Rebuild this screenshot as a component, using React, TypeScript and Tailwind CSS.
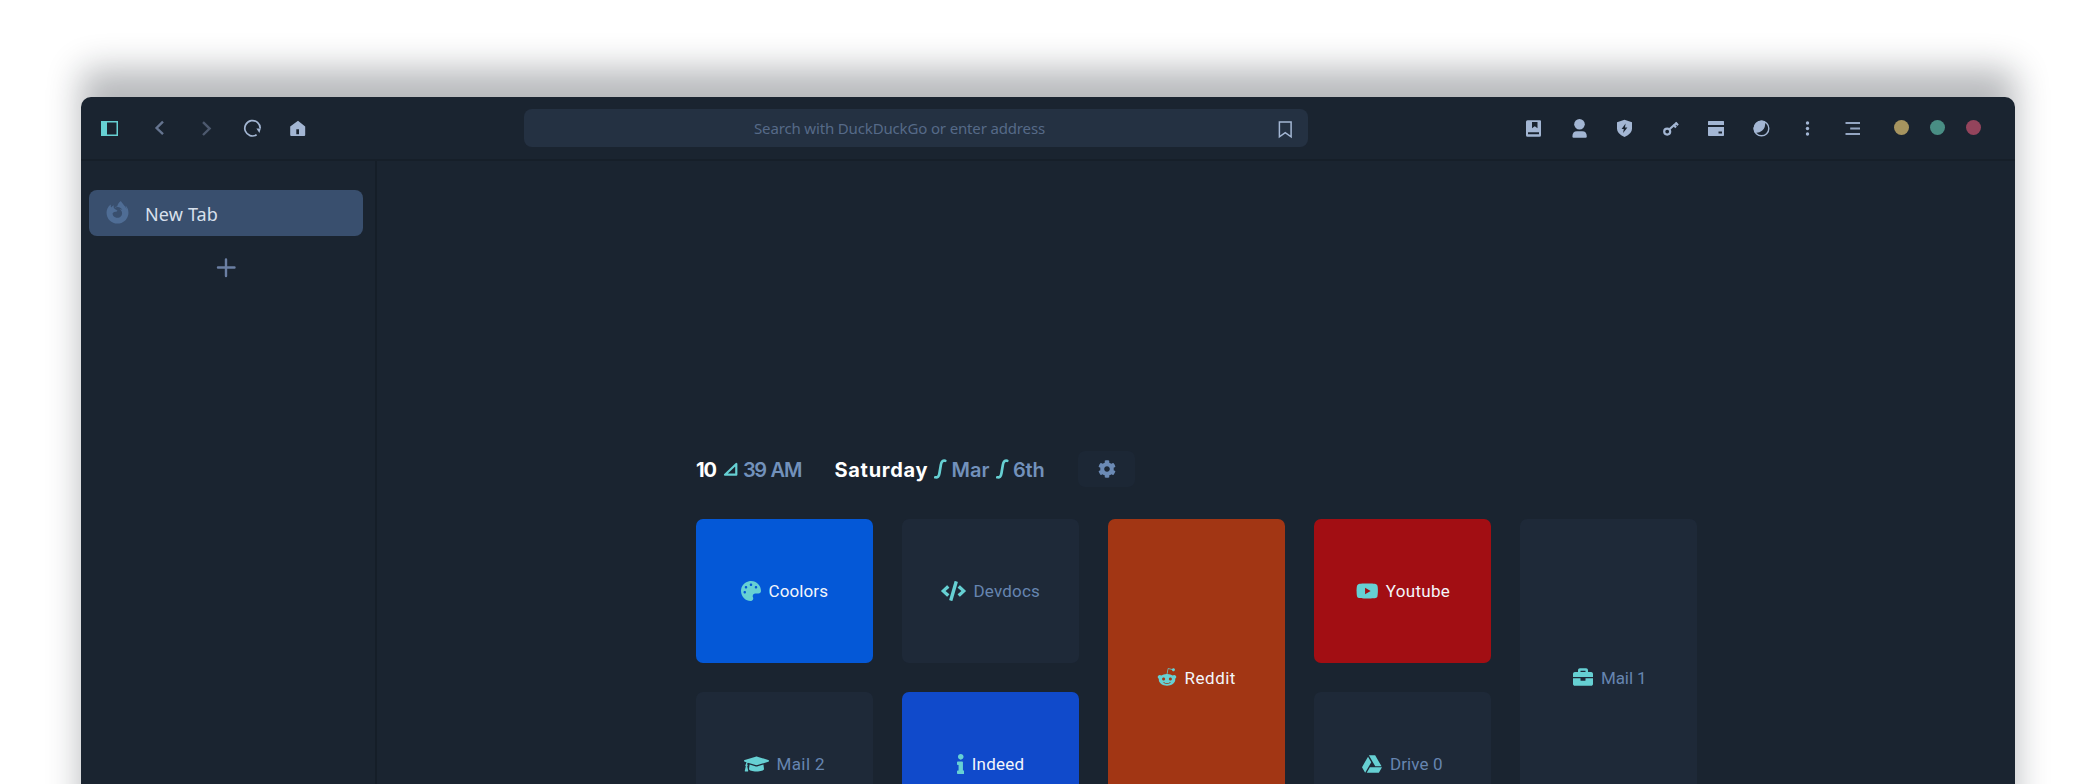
import type { ReactNode } from "react";
import { FaBriefcase, FaCode, FaCog, FaFirefoxBrowser, FaGoogleDrive, FaGraduationCap, FaInfo, FaPalette, FaRedditAlien, FaYoutube } from "react-icons/fa";

function Icon({ children, className = "" }: { children: ReactNode; className?: string }) {
  return (
    <svg width="24" height="24" viewBox="0 0 24 24" fill="none" className={`shrink-0 ${className}`}>
      {children}
    </svg>
  );
}

function NavButtons() {
  return (
    <div className="flex w-[443px] shrink-0 items-center pl-[17px]">
      <Icon className="text-[#66d0d3]">
        <rect x="3.75" y="5.75" width="15.5" height="13.5" stroke="currentColor" strokeWidth="1.5" />
        <rect x="3" y="5" width="6" height="15" fill="currentColor" />
      </Icon>
      <Icon className="ml-[26px] text-[#65748f]">
        <path d="M15 5.7 8.6 12l6.4 6.2" stroke="currentColor" strokeWidth="2.4" />
      </Icon>
      <Icon className="ml-[22px] text-[#4d596e]">
        <path d="M9 6.2l6.600 6.400L9 19" stroke="currentColor" strokeWidth="2.4" />
      </Icon>
      <Icon className="ml-[22px] text-[#a3b6d3]">
        <path d="M16.600 18.800A7.700 7.700 0 1 1 20.200 12.400" stroke="currentColor" strokeWidth="1.700" />
        <path d="M16.400 12.600h4.400l-1.400 4.400z" fill="currentColor" />
      </Icon>
      <Icon className="ml-[22px] text-[#a3b6d3]">
        <path fillRule="evenodd" fill="currentColor" d="M12 4.700 4.200 10.400V19q0 1 1 1h13q1 0 1-1v-8.600zM10.300 13.200h2.700V18.300h-2.700z" />
      </Icon>
    </div>
  );
}

function ToolButtons() {
  return (
    <div className="ml-[214px] flex shrink-0 items-center text-[#a3b6d3]">
      <Icon>
        <path fillRule="evenodd" fill="currentColor" d="M5.500 4.300h12.500q1 0 1 1v14q0 1.500-1.500 1.500H5.500q-1.500 0-1.500-1.500V5.800q0-1.500 1.500-1.500zM10 6v6.200l2.800-2 2.700 2V6zM6 16.300v2h11v-2z" />
      </Icon>
      <Icon className="ml-[22px]">
        <circle cx="11.500" cy="8.200" r="5.300" fill="currentColor" />
        <path fill="currentColor" d="M4.400 20.500q0-5.300 4.600-5.300h5.200q4.600 0 4.600 5.300 0 1.300-1.200 1.300H5.600q-1.200 0-1.200-1.300z" />
      </Icon>
      <Icon className="ml-[21px]">
        <path fillRule="evenodd" fill="currentColor" d="M11.500 3.800 19 6.300v6.500q0 5-7.500 8.200Q4 17.800 4 12.800V6.300zM12.600 7.600 8.600 13h2.200l-.7 4 4.300-5.600h-2.400z" />
      </Icon>
      <Icon className="ml-[22px]">
        <circle cx="8.200" cy="15.600" r="3" stroke="currentColor" strokeWidth="2.200" />
        <path d="M10.400 13.300 17.500 7" stroke="currentColor" strokeWidth="2.200" />
        <path d="m14.600 8.600 2.400 2.900M16.600 6.600l2.400 2.600" stroke="currentColor" strokeWidth="2.200" />
      </Icon>
      <Icon className="ml-[21px]">
        <path fillRule="evenodd" fill="currentColor" d="M4.600 5h14.800q.6 0 .6.600V9H4V5.600Q4 5 4.600 5zM4 11h16v8.300q0 .700-.7.700H4.700q-.7 0-.7-.7zM14.500 15.500v2H18v-2z" />
      </Icon>
      <Icon className="ml-[22px]">
        <circle cx="11.500" cy="12.500" r="7.300" stroke="currentColor" strokeWidth="1.400" />
        <path fill="currentColor" d="M15 5.500a7.900 7.900 0 0 0-10.300 11Q8.500 17.500 12 14.800 16 11.500 15 5.500z" />
      </Icon>
      <Icon className="ml-[22px]">
        <circle cx="11.500" cy="7" r="1.700" fill="currentColor" />
        <circle cx="11.500" cy="12.500" r="1.700" fill="currentColor" />
        <circle cx="11.500" cy="18" r="1.700" fill="currentColor" />
      </Icon>
      <Icon className="ml-[21px] text-[#94a6c2]">
        <path d="M4.500 7H19M9.200 12.500H19M4.500 18H19" stroke="currentColor" strokeWidth="1.800" />
      </Icon>
      <div className="ml-[29px] -mt-[2px] flex gap-[21px]">
        <span className="size-[15px] rounded-full bg-[#a6945f]" />
        <span className="size-[15px] rounded-full bg-[#498e84]" />
        <span className="size-[15px] rounded-full bg-[#94445c]" />
      </div>
    </div>
  );
}

function Tile({ icon, label, className, text }: { icon: ReactNode; label: string; className: string; text: string }) {
  return (
    <a className={`flex items-center justify-center gap-[7.500px] rounded-[7px] font-[Roboto,sans-serif] text-[17px] ${className}`}>
      <span className="-mt-px text-[20px] text-[#66d0d3]">{icon}</span>
      <span className={`whitespace-nowrap leading-6 ${text}`}>{label}</span>
    </a>
  );
}

function Clock() {
  return (
    <div className="flex h-9 items-center whitespace-nowrap font-[Inter,sans-serif] text-[20px] font-semibold text-[#7291bb]">
      <span className="w-[27px] pt-[2px] font-bold tracking-[-1px] text-white">10</span>
      <svg width="15" height="16" viewBox="0 0 15 16" fill="none" className="mr-[5px]">
        <path d="M2 13.700 13.300 3v10.700z" stroke="#66d0d3" strokeWidth="2.200" strokeLinejoin="round" />
      </svg>
      <span className="w-[27.500px] pt-[2px] tracking-[-1.500px]">39</span>
      <span className="w-[64px] pt-[2px] tracking-[-1px]">AM</span>
      <span className="w-[99.500px] pt-[2px] font-bold tracking-[0.700px] text-white">Saturday</span>
      <IntegralMark />
      <span className="ml-[4.500px] w-[44px] pt-[2px]">Mar</span>
      <IntegralMark />
      <span className="ml-[4.500px] w-[65px] pt-[2px] tracking-[-0.200px]">6th</span>
      <button className="flex h-9 w-[57px] items-center justify-center rounded-[7px] bg-[#1c2735] text-[18px] text-[#6b8ab5]">
        <FaCog />
      </button>
    </div>
  );
}

function IntegralMark() {
  return (
    <svg width="13" height="20" viewBox="0 0 13 20" fill="none">
      <path d="M1.300 18.300Q4.700 19 5.400 14.500L6.900 5.600Q7.700 1 11.300 1.800" stroke="#66d0d3" strokeWidth="2.700" strokeLinecap="round" />
    </svg>
  );
}

export default function App() {
  return (
    <div className="h-[784px] w-[2094px] overflow-hidden bg-white pt-[97px] pl-[81px]">
      <div className="flex h-[760px] w-[1934px] flex-col rounded-[10px] bg-[#1a2430] shadow-[0_-28px_34px_rgba(16,22,34,0.3)]">
        <header className="flex h-16 shrink-0 items-center border-b-2 border-[#161f29]">
          <NavButtons />
          <div className="flex h-[38px] w-[784px] shrink-0 items-center rounded-[8px] bg-[#243142]">
            <span className="ml-[230px] flex-1 whitespace-nowrap font-['Noto_Sans',sans-serif] text-[15px] tracking-[-0.150px] text-[#566a88]">
              Search with DuckDuckGo or enter address
            </span>
            <Icon className="mr-[10px] text-[#a3b6d3]">
              <path d="M5.400 6.100h11.700v14.800l-5.850-4.200-5.850 4.200z" stroke="currentColor" strokeWidth="1.500" />
            </Icon>
          </div>
          <ToolButtons />
        </header>
        <div className="flex min-h-0 flex-1">
          <aside className="w-[296px] shrink-0 border-r-2 border-[#151e28] pt-[29px] pl-2">
            <div className="flex h-[46px] w-[274px] items-center rounded-[8px] bg-[#394f6e] pl-[17px]">
              <FaFirefoxBrowser className="-mt-[1px] size-[23px] text-[#4f6d95]" />
              <span className="mt-[2px] ml-[16px] font-['Noto_Sans',sans-serif] text-[18px] tracking-[0.150px] text-[#d8e0ec]">New Tab</span>
            </div>
            <div className="mt-[19px] ml-[125px] text-[#6b7fa3]">
              <Icon>
                <path d="M4 12.500h16.500M12 4.500v16.500" stroke="currentColor" strokeWidth="2.400" strokeLinecap="round" />
              </Icon>
            </div>
          </aside>
          <main className="pt-[290px] pl-[319px]">
            <Clock />
            <div className="mt-8 grid grid-cols-[repeat(5,177px)] grid-rows-[144px_144px] gap-[29px]">
              <Tile icon={<FaPalette />} label="Coolors" className="bg-[#0458d7] text-[#f3f6fb]" text="tracking-[0.100px]" />
              <Tile icon={<FaCode className="h-5 w-[25px]" />} label="Devdocs" className="bg-[#1e2938] text-[#6685b0]" text="tracking-[0.200px]" />
              <Tile icon={<FaRedditAlien />} label="Reddit" className="row-span-2 bg-[#a23614] text-[#f3f6fb]" text="tracking-[0.500px]" />
              <Tile icon={<FaYoutube className="h-5 w-[22.500px]" />} label="Youtube" className="bg-[#a20e13] pl-px text-[#f3f6fb]" text="tracking-[0.300px]" />
              <Tile icon={<FaBriefcase />} label="Mail 1" className="row-span-2 bg-[#1e2938] pl-[2px] text-[#6685b0]" text="-mr-px tracking-[-0.100px]" />
              <Tile icon={<FaGraduationCap className="h-5 w-[25px]" />} label="Mail 2" className="bg-[#1e2938] text-[#6685b0]" text="tracking-[0.400px]" />
              <Tile icon={<FaInfo className="h-5 w-[7.500px]" />} label="Indeed" className="bg-[#104acb] text-[#f3f6fb]" text="tracking-[0.200px]" />
              <Tile icon={<FaGoogleDrive />} label="Drive 0" className="bg-[#1e2938] text-[#6685b0]" text="tracking-[0.100px]" />
            </div>
          </main>
        </div>
      </div>
    </div>
  );
}
